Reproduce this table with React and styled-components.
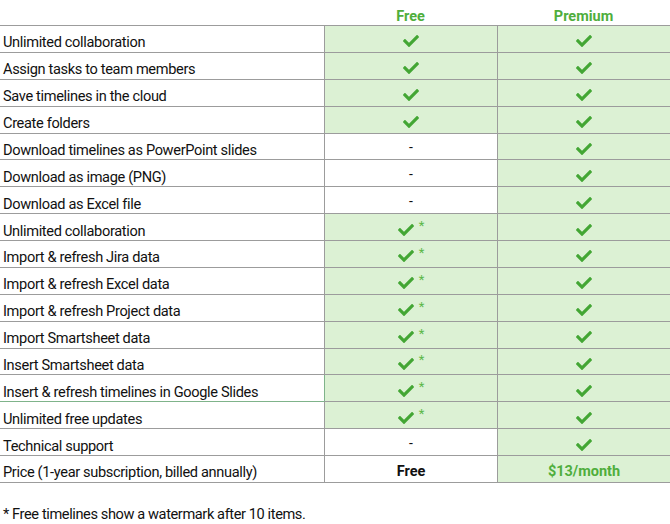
import styled, { createGlobalStyle } from "styled-components";
import { FaCheck } from "react-icons/fa";

const features = [
    { name: "Unlimited collaboration", free: "check" },
    { name: "Assign tasks to team members", free: "check" },
    { name: "Save timelines in the cloud", free: "check" },
    { name: "Create folders", free: "check" },
    { name: "Download timelines as PowerPoint slides", free: "none" },
    { name: "Download as image (PNG)", free: "none" },
    { name: "Download as Excel file", free: "none" },
    { name: "Unlimited collaboration", free: "star" },
    { name: "Import & refresh Jira data", free: "star" },
    { name: "Import & refresh Excel data", free: "star" },
    { name: "Import & refresh Project data", free: "star" },
    { name: "Import Smartsheet data", free: "star" },
    { name: "Insert Smartsheet data", free: "star" },
    { name: "Insert & refresh timelines in Google Slides", free: "star", selected: true },
    { name: "Unlimited free updates", free: "star" },
    { name: "Technical support", free: "none" },
];

const Check = () => <FaCheck size={16} color="#43a634" />;

const App = () => {
    return (
        <>
            <GlobalStyle />
            <Page>
                <Table>
                    <HeadCell />
                    <HeadCell>Free</HeadCell>
                    <HeadCell>Premium</HeadCell>

                    {features.map((f, i) => (
                        <Row key={i}>
                            <Label $selected={f.selected}>{f.name}</Label>
                            <Cell $green={f.free !== "none"} $selected={f.selected}>
                                {f.free === "none" ? <Dash>-</Dash> : <Check />}
                                {f.free === "star" && <Star>*</Star>}
                            </Cell>
                            <Cell $green><Check /></Cell>
                        </Row>
                    ))}

                    <Row>
                        <Label>Price (1-year subscription, billed annually)</Label>
                        <Cell><Price>Free</Price></Cell>
                        <Cell $green><Price $green>$13/month</Price></Cell>
                    </Row>
                </Table>
                <Footnote>* Free timelines show a watermark after 10 items.</Footnote>
            </Page>
        </>
    );
}

const GlobalStyle = createGlobalStyle`
    body {
        margin: 0;
        background: #fff;
        font-family: Roboto, "Liberation Sans", Arial, sans-serif;
        color: #111;
    }
`

const Page = styled.div`
    width: 670px;
    height: 524px;
    overflow: hidden;
`

const Table = styled.div`
    display: grid;
    grid-template-columns: 324px 173px 173px;
    grid-template-rows: 26px;
    grid-auto-rows: 26.88px;
`

const Row = styled.div`
    display: contents;
`

const HeadCell = styled.div`
    display: flex;
    align-items: flex-end;
    justify-content: center;
    padding-bottom: 0;
    box-sizing: border-box;
    border-bottom: 1px solid #9c9c9c;
    color: #4fae3c;
    font-weight: bold;
    font-size: 14.5px;
`

const Label = styled.div`
    display: flex;
    align-items: center;
    padding: 7px 0 0 3px;
    box-sizing: border-box;
    border-bottom: 1px solid ${p => p.$selected ? "#7fb38a" : "#9c9c9c"};
    font-size: 14.6px;
    letter-spacing: -0.35px;
    white-space: nowrap;
`

const Cell = styled.div`
    display: flex;
    align-items: center;
    justify-content: center;
    padding-top: 5px;
    box-sizing: border-box;
    border-left: 1px solid ${p => p.$selected ? "#7fb38a" : "#9c9c9c"};
    border-bottom: 1px solid #9c9c9c;
    background: ${p => p.$green ? "#dcf1d4" : "#fff"};
`

const Star = styled.span`
    color: #5cb84a;
    font-size: 13px;
    margin-left: 5px;
    margin-top: -8px;
`

const Dash = styled.span`
    font-size: 14px;
    margin-top: -4px;
`

const Price = styled.span`
    font-weight: bold;
    font-size: 14.5px;
    color: ${p => p.$green ? "#4fae3c" : "#111"};
`

const Footnote = styled.p`
    margin: 22px 0 0 3px;
    font-size: 14.6px;
    letter-spacing: -0.4px;
`

export default App;
